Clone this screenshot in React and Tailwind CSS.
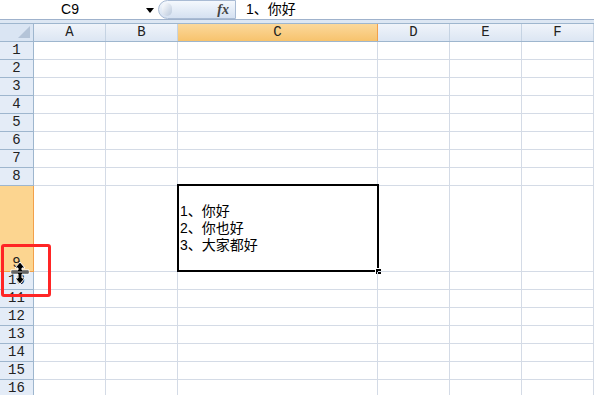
import React from "react";

const cols = [
  { key: "A", w: "w-[72px]" },
  { key: "B", w: "w-[72px]" },
  { key: "C", w: "w-[200px]" },
  { key: "D", w: "w-[72px]" },
  { key: "E", w: "w-[72px]" },
  { key: "F", w: "w-[72px]" },
];

const rows = [1, 2, 3, 4, 5, 6, 7, 8, 9, 10, 11, 12, 13, 14, 15, 16];

// row resize cursor
const ResizeCursor = () => (
  <svg width="22" height="24" viewBox="0 0 22 24" className="absolute left-[9px] top-[261px]">
    <path
      d="M11 1 L16 7 H13 V9 H20 V13 H13 V17 H16 L11 23 L6 17 H9 V13 H2 V9 H9 V7 H6 Z"
      fill="#000"
      stroke="#fff"
      strokeWidth="1"
      strokeLinejoin="miter"
    />
    <path d="M3 11 H19" stroke="#fff" strokeWidth="0.8" />
  </svg>
);

const App = () => {
  return (
    <div className="relative w-[594px] h-[395px] overflow-hidden bg-white font-['Liberation_Sans','Noto_Sans_CJK_SC',sans-serif]">
      {/* Formula bar */}
      <div className="flex h-[20px] items-center border-b border-[#9fb2cc] bg-white">
        <div className="relative flex h-full w-[158px] items-center">
          <span className="w-[140px] text-center text-[14px] text-black">C9</span>
          <span className="absolute left-[146px] top-[8px] h-0 w-0 border-x-[4px] border-t-[5px] border-x-transparent border-t-black"></span>
        </div>
        <div className="flex h-[19px] w-[78px] items-center justify-between rounded-l-full border border-[#a9bbd4] bg-gradient-to-b from-[#f4f8fd] to-[#d5e1f1] pl-[3px] pr-[6px]">
          <span className="h-[13px] w-[10px] rounded-full bg-gradient-to-br from-white to-[#b9c8dc]"></span>
          <span className="font-['Liberation_Serif',serif] text-[14px] font-bold italic text-[#444]">fx</span>
        </div>
        <span className="ml-[10px] text-[14px] text-black">1、你好</span>
      </div>
      <div className="h-[3px] bg-[#dde7f3]"></div>

      {/* Sheet */}
      <div className="font-['Liberation_Mono','Noto_Sans_CJK_SC',monospace] text-[14px] text-[#222]">
        <div className="flex h-[19px] border-t border-b border-[#9eb6ce]">
          <div className="relative w-[34px] border-r border-[#9eb6ce] bg-[#dae5f3]">
            <svg width="12" height="12" className="absolute right-[3px] bottom-[3px]">
              <path d="M12 0 V12 H0 Z" fill="#b4c4d8" />
            </svg>
          </div>
          {cols.map((c) =>
            c.key === "C" ? (
              <div
                key={c.key}
                className={`${c.w} flex items-center justify-center border-r border-[#f2a04a] bg-gradient-to-b from-[#fbd89a] to-[#f7c36d]`}
              >
                {c.key}
              </div>
            ) : (
              <div
                key={c.key}
                className={`${c.w} flex items-center justify-center border-r border-[#c5d3e3] bg-gradient-to-b from-[#f0f4fa] to-[#dce6f3]`}
              >
                {c.key}
              </div>
            )
          )}
        </div>

        {rows.map((r) => {
          const sel = r === 9;
          return (
            <div key={r} className={`flex ${sel ? "h-[86px]" : "h-[18px]"}`}>
              <div
                className={`flex w-[34px] justify-center border-r border-b ${
                  sel
                    ? "items-end border-r-[#f2a04a] border-b-[#f2a04a] bg-[#fcd590] leading-[16px]"
                    : "items-center border-[#9eb6ce] bg-[#e4ecf7]"
                }`}
              >
                {r}
              </div>
              {cols.map((c) => (
                <div key={c.key} className={`${c.w} relative border-r border-b border-[#d4dbe6]`}>
                  {sel && c.key === "C" && (
                    <div className="absolute -left-[1px] -top-[2px] h-[88px] w-[202px] border-[2px] border-black bg-white pl-[1px] pt-[17px] font-['Liberation_Sans','Noto_Sans_CJK_SC',sans-serif] text-[14px] leading-[17px] text-black">
                      <div>1、你好</div>
                      <div>2、你也好</div>
                      <div>3、大家都好</div>
                      <span className="absolute -right-[5px] -bottom-[5px] h-[7px] w-[7px] border border-white bg-black"></span>
                    </div>
                  )}
                </div>
              ))}
            </div>
          );
        })}
      </div>

      {/* Red highlight box */}
      <div className="absolute left-[1px] top-[244px] h-[53px] w-[50px] rounded-[3px] border-[3px] border-[#ff2525]"></div>
      <ResizeCursor />
    </div>
  );
};

export default App;
